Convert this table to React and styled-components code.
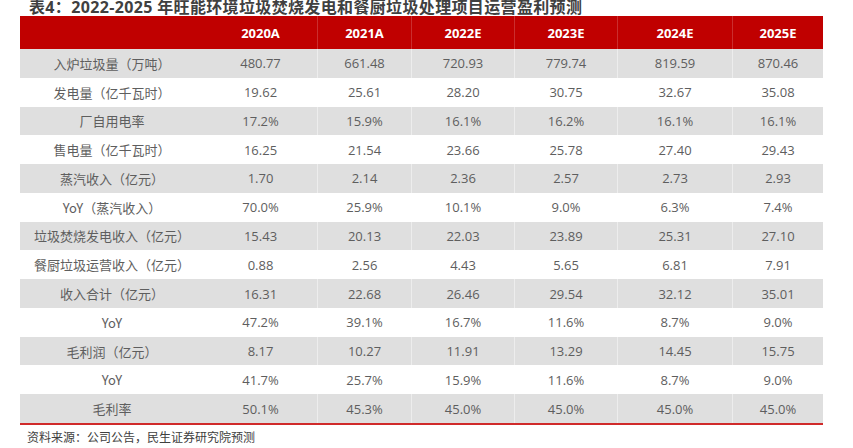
import React from "react";
import styled, { createGlobalStyle } from "styled-components";

const Global = createGlobalStyle`
  html, body { margin: 0; padding: 0; background: #fff; }
  body { width: 853px; height: 448px; overflow: hidden; }
`;

const Page = styled.div`
  width: 853px;
  height: 448px;
  overflow: hidden;
  display: flex;
  flex-direction: column;
`;

const Title = styled.div`
  height: 17px;
  margin-top: -1px;
  padding-left: 29px;
  font-family: "Open Sans", "Noto Sans CJK SC", sans-serif;
  font-weight: 700;
  font-size: 16px;
  line-height: 16px;
  letter-spacing: 0.35px;
  color: #404040;
  white-space: nowrap;
`;

const Table = styled.div`
  margin-left: 20px;
  width: 803px;
  display: flex;
  flex-direction: column;
  border-bottom: 2px solid #d02a2a;
`;

const COLS = "183px 114px 94px 103px 103px 115px 91px";

const HeadRow = styled.div`
  display: grid;
  grid-template-columns: ${COLS};
  height: 33px;
  background: #c00000;
`;

const HeadCell = styled.div`
  display: flex;
  align-items: center;
  justify-content: center;
  font-family: "Open Sans", "Noto Sans CJK SC", sans-serif;
  font-weight: 700;
  font-size: 13px;
  color: #ffffff;
  border-left: 1px solid ${(p) => (p.$divider ? "rgba(255,255,255,0.18)" : "transparent")};
`;

const Row = styled.div`
  display: grid;
  grid-template-columns: ${COLS};
  height: 28.77px;
  background: ${(p) => (p.$shade ? "#dfdfdf" : "#ffffff")};
`;

const Cell = styled.div`
  display: flex;
  align-items: center;
  justify-content: center;
  font-family: "Open Sans", "Noto Sans CJK SC", sans-serif;
  font-size: 13px;
  color: #5e5e5e;
  white-space: nowrap;
  border-left: 1px solid ${(p) => (p.$divider ? "rgba(255,255,255,0.45)" : "transparent")};
`;

const Label = styled(Cell)`
  font-family: "Noto Sans CJK SC", "Open Sans", sans-serif;
`;

const Source = styled.div`
  padding: 4px 0 0 27px;
  font-family: "Noto Sans CJK SC", sans-serif;
  font-size: 12px;
  line-height: 16px;
  color: #404040;
`;

const years = ["2020A", "2021A", "2022E", "2023E", "2024E", "2025E"];

const rows = [
  ["入炉垃圾量（万吨）", "480.77", "661.48", "720.93", "779.74", "819.59", "870.46"],
  ["发电量（亿千瓦时）", "19.62", "25.61", "28.20", "30.75", "32.67", "35.08"],
  ["厂自用电率", "17.2%", "15.9%", "16.1%", "16.2%", "16.1%", "16.1%"],
  ["售电量（亿千瓦时）", "16.25", "21.54", "23.66", "25.78", "27.40", "29.43"],
  ["蒸汽收入（亿元）", "1.70", "2.14", "2.36", "2.57", "2.73", "2.93"],
  ["YoY（蒸汽收入）", "70.0%", "25.9%", "10.1%", "9.0%", "6.3%", "7.4%"],
  ["垃圾焚烧发电收入（亿元）", "15.43", "20.13", "22.03", "23.89", "25.31", "27.10"],
  ["餐厨垃圾运营收入（亿元）", "0.88", "2.56", "4.43", "5.65", "6.81", "7.91"],
  ["收入合计（亿元）", "16.31", "22.68", "26.46", "29.54", "32.12", "35.01"],
  ["YoY", "47.2%", "39.1%", "16.7%", "11.6%", "8.7%", "9.0%"],
  ["毛利润（亿元）", "8.17", "10.27", "11.91", "13.29", "14.45", "15.75"],
  ["YoY", "41.7%", "25.7%", "15.9%", "11.6%", "8.7%", "9.0%"],
  ["毛利率", "50.1%", "45.3%", "45.0%", "45.0%", "45.0%", "45.0%"],
];

export default function App() {
  return (
    <Page>
      <Global />
      <Title>表4：2022-2025 年旺能环境垃圾焚烧发电和餐厨垃圾处理项目运营盈利预测</Title>
      <Table>
        <HeadRow>
          <HeadCell />
          {years.map((y, i) => (
            <HeadCell key={y} $divider={i > 0}>
              {y}
            </HeadCell>
          ))}
        </HeadRow>
        {rows.map((r, ri) => (
          <Row key={ri} $shade={ri % 2 === 0}>
            <Label>{r[0]}</Label>
            {r.slice(1).map((v, ci) => (
              <Cell key={ci} $divider={ci > 0}>
                {v}
              </Cell>
            ))}
          </Row>
        ))}
      </Table>
      <Source>资料来源：公司公告，民生证券研究院预测</Source>
    </Page>
  );
}
